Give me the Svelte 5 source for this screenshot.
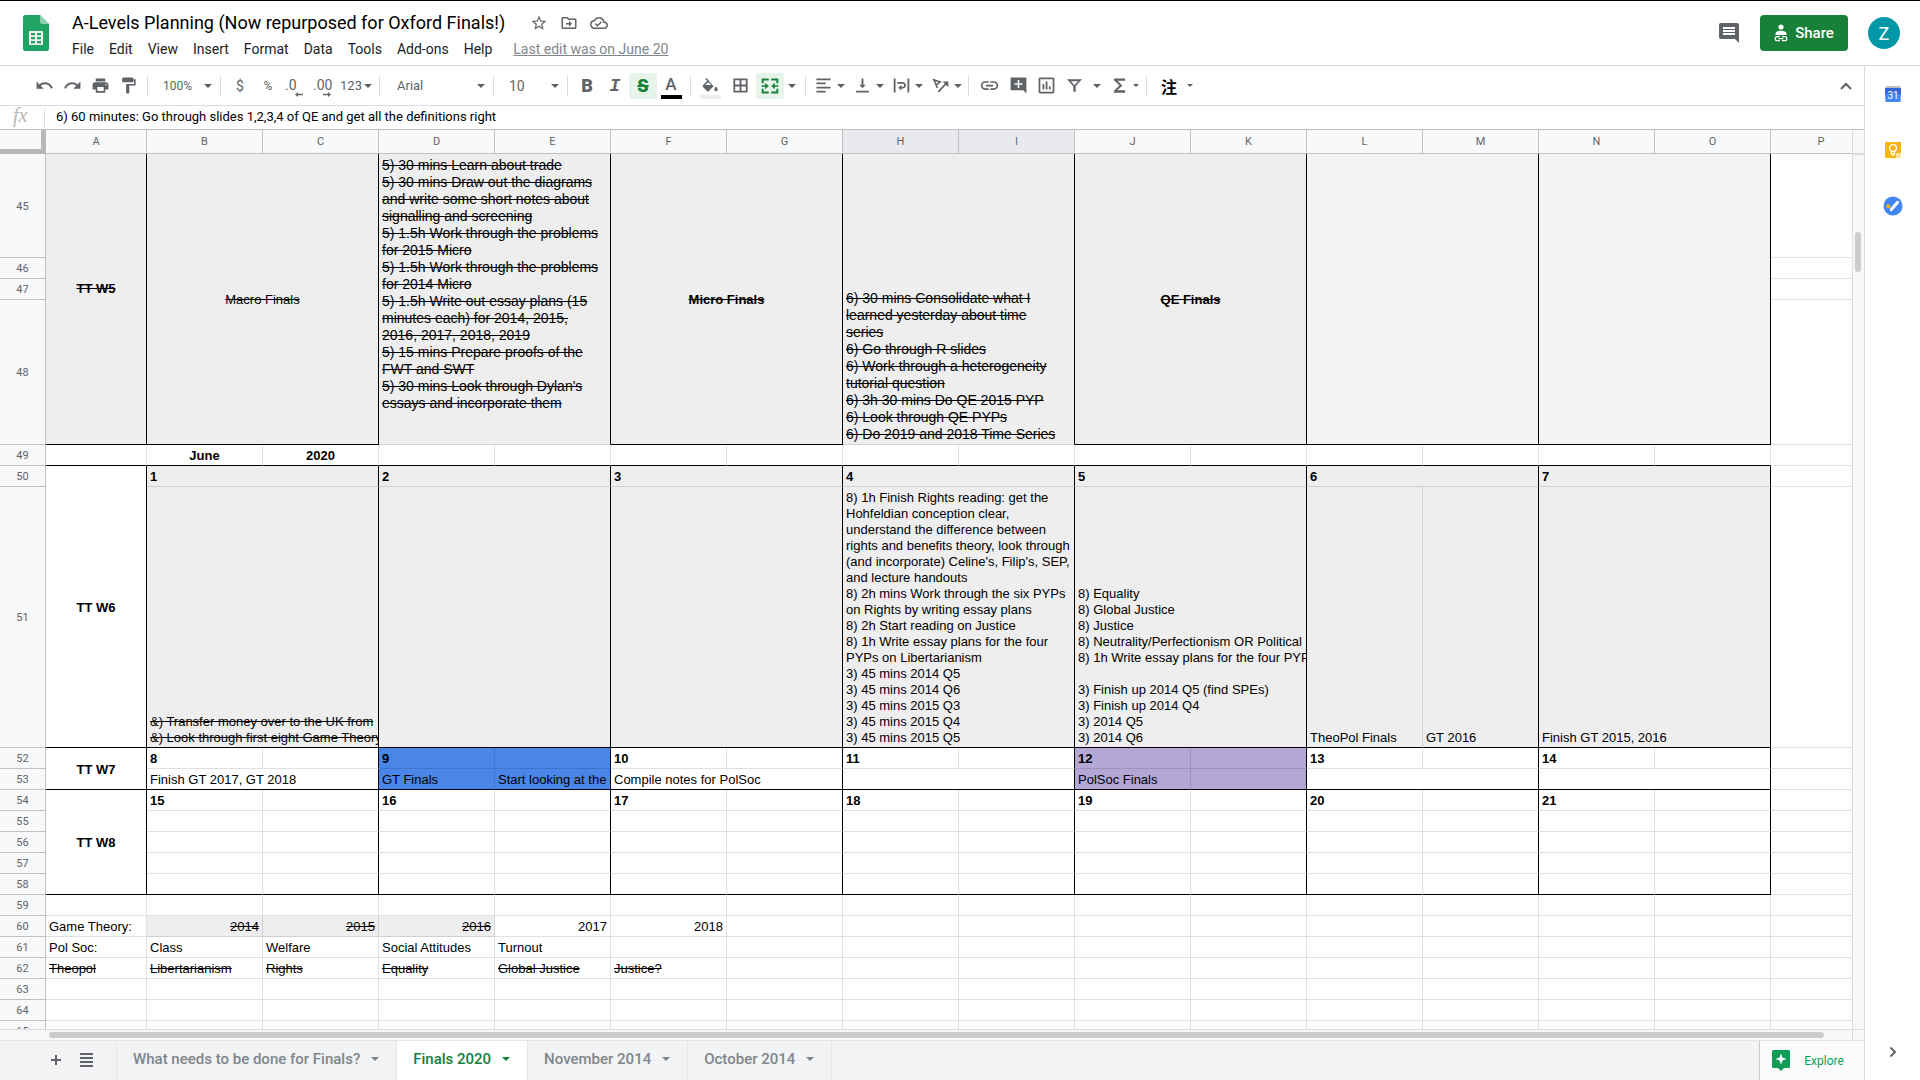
<script>
  const menus = ['File', 'Edit', 'View', 'Insert', 'Format', 'Data', 'Tools', 'Add-ons', 'Help'];

  const icons = {
    undo: 'M12.5 8c-2.65 0-5.05.99-6.9 2.6L2 7v9h9l-3.62-3.62c1.39-1.16 3.16-1.88 5.12-1.88 3.54 0 6.55 2.31 7.6 5.5l2.37-.78C21.08 11.03 17.15 8 12.5 8z',
    redo: 'M18.4 10.6C16.55 8.99 14.15 8 11.5 8c-4.65 0-8.58 3.03-9.96 7.22L3.9 16c1.05-3.19 4.05-5.5 7.6-5.5 1.95 0 3.73.72 5.12 1.88L13 16h9V7l-3.6 3.6z',
    print: 'M19 8H5c-1.66 0-3 1.34-3 3v6h4v4h12v-4h4v-6c0-1.66-1.34-3-3-3zm-3 11H8v-5h8v5zm3-7c-.55 0-1-.45-1-1s.45-1 1-1 1 .45 1 1-.45 1-1 1zm-1-9H6v4h12V3z',
    paint: 'M18 4V3c0-.55-.45-1-1-1H5c-.55 0-1 .45-1 1v4c0 .55.45 1 1 1h12c.55 0 1-.45 1-1V6h1v4H9v11c0 .55.45 1 1 1h2c.55 0 1-.45 1-1v-9h8V4h-3z',
    borders: 'M2 2v20h20V2H2zm8.700 17.500H4.500v-6.200h6.200v6.200zm0-8.800H4.500V4.500h6.200v6.200zm8.800 8.800h-6.200v-6.200h6.200v6.200zm0-8.800h-6.200V4.500h6.200v6.200z',
    merge: 'M2 3h8.500v2.400H4.400v3.400H2zM13.500 3H22v5.800h-2.400V5.400h-6.100zM2 15.200h2.400v3.400h6.100V21H2zM19.600 15.200H22V21h-8.500v-2.400h6.100zM2 11h4.200V8.200L10.500 12l-4.300 3.800V13H2zM22 11h-4.200V8.200L13.500 12l4.300 3.800V13H22z',
    align: 'M2 2h20v2.600H2zM2 7.800h13v2.600H2zM2 13.600h20v2.600H2zM2 19.400h13V22H2z',
    bottom: 'M16.500 11h-3.200V2h-2.600v9H7.500l4.500 5 4.500-5zM3 19.400V22h18v-2.600H3z',
    wrap: 'M1 2h2.600v20H1zM20.400 2H23v20h-2.600zM6 7h7.500c3 0 4.800 2 4.800 4.600s-1.800 4.600-4.800 4.600H12V19l-4.500-4L12 11.200v2.600h1.500c1.400 0 2.300-.9 2.300-2.200s-.9-2.200-2.300-2.200H6z',
    link: 'M3.900 12c0-1.710 1.390-3.100 3.100-3.100h4V7H7c-2.760 0-5 2.240-5 5s2.240 5 5 5h4v-1.900H7c-1.710 0-3.100-1.390-3.100-3.100zM8 13h8v-2H8v2zm9-6h-4v1.900h4c1.710 0 3.100 1.390 3.100 3.100s-1.390 3.100-3.100 3.100h-4V17h4c2.760 0 5-2.240 5-5s-2.240-5-5-5z',
    addComment: 'M22 2.500c0-.300-.2-.5-.5-.5h-19c-.3 0-.5.200-.5.500v15.500h16l4 4V2.500zM17 11h-4v4h-2v-4H7V9h4V5h2v4h4v2z',
    chart: 'M20 2H4c-1.100 0-2 .9-2 2v16c0 1.100.9 2 2 2h16c1.100 0 2-.9 2-2V4c0-1.100-.9-2-2-2zm-.2 17.800H4.200V4.200h15.600v15.600zM7 10h2.200v7H7zM11 7h2.200v10H11zM15 13h2.200v4H15z',
    filter: 'M2.500 4L10.500 13v7h3v-7l8-9h-19zm5 2.500h9L12 11.600z',
    sum: 'M19 3H5v2.500L12 12l-7 6.500V21h14v-3H9.500l6-6-6-6H19z',
    star: 'M22 9.240l-7.190-.62L12 2 9.190 8.630 2 9.240l5.460 4.730L5.820 21 12 17.270 18.180 21l-1.630-7.030L22 9.240zM12 15.400l-3.760 2.270 1-4.280-3.320-2.880 4.380-.38L12 6.100l1.710 4.040 4.380.38-3.320 2.880 1 4.280L12 15.400z',
    folder: 'M20 6h-8l-2-2H4c-1.100 0-2 .9-2 2v12c0 1.100.9 2 2 2h16c1.100 0 2-.9 2-2V8c0-1.100-.9-2-2-2zm0 12H4V6h5.200l2 2H20v10zm-8-1l4-4-4-4v3H8v2h4v3z',
    cloud: 'M19.350 10.040A7.490 7.490 0 0 0 12 4C9.110 4 6.600 5.640 5.350 8.040A5.994 5.994 0 0 0 0 14c0 3.310 2.690 6 6 6h13c2.760 0 5-2.240 5-5 0-2.640-2.050-4.780-4.650-4.960zM19 18H6c-2.210 0-4-1.790-4-4 0-2.050 1.530-3.760 3.560-3.970l1.070-.11.500-.950A5.469 5.469 0 0 1 12 6c2.620 0 4.880 1.860 5.390 4.430l.3 1.500 1.530.11A2.980 2.980 0 0 1 22 15c0 1.650-1.350 3-3 3zm-9-3.820l-2.090-2.090L6.500 13.500 10 17l6.010-6.010-1.410-1.410z'
  };

  const columns = [
    { name: 'A', w: 101 },
    ...'BCDEFGHIJKLMNO'.split('').map((name) => ({ name, w: 116 })),
    { name: 'P', w: 101 }
  ];

  const cell = (cls = '', text = '', cs = 1, rs = 1) => ({ cls, text, cs, rs });
  const blanks = (n, cls = '') => Array.from({ length: n }, () => cell(cls));

  const microTasks = `5) 30 mins Learn about trade
5) 30 mins Draw out the diagrams
and write some short notes about
signalling and screening
5) 1.5h Work through the problems
for 2015 Micro
5) 1.5h Work through the problems
for 2014 Micro
5) 1.5h Write out essay plans (15
minutes each) for 2014, 2015,
2016, 2017, 2018, 2019
5) 15 mins Prepare proofs of the
FWT and SWT
5) 30 mins Look through Dylan's
essays and incorporate them`;

  const seriesTasks = `6) 30 mins Consolidate what I
learned yesterday about time
series
6) Go through R slides
6) Work through a heterogeneity
tutorial question
6) 3h 30 mins Do QE 2015 PYP
6) Look through QE PYPs
6) Do 2019 and 2018 Time Series`;

  const rightsTasks = `8) 1h Finish Rights reading: get the
Hohfeldian conception clear,
understand the difference between
rights and benefits theory, look through
(and incorporate) Celine's, Filip's, SEP,
and lecture handouts
8) 2h mins Work through the six PYPs
on Rights by writing essay plans
8) 2h Start reading on Justice
8) 1h Write essay plans for the four
PYPs on Libertarianism
3) 45 mins 2014 Q5
3) 45 mins 2014 Q6
3) 45 mins 2015 Q3
3) 45 mins 2015 Q4
3) 45 mins 2015 Q5`;

  const equalityTasks = `8) Equality
8) Global Justice
8) Justice
8) Neutrality/Perfectionism OR Political
8) 1h Write essay plans for the four PYPs

3) Finish up 2014 Q5 (find SPEs)
3) Finish up 2014 Q4
3) 2014 Q5
3) 2014 Q6`;

  const transferTasks = `&) Transfer money over to the UK from
&) Look through first eight Game Theory`;

  // a row of day numbers: two columns per day, split in two cells
  const dayRow = (first, fills = {}) =>
    [0, 1, 2, 3, 4, 5, 6].flatMap((i) => {
      const fill = fills[i] ?? '';
      return [cell(`bold ${fill}`, String(first + i)), cell(`kr ${fill}`)];
    });
  const emptyWeekRow = (extra = '') =>
    [0, 1, 2, 3, 4, 5, 6].flatMap(() => [cell(extra), cell(`kr ${extra}`)]);

  const rows = [
    { n: 45, h: 104, cells: [
      cell('grey kr kb bold strike mid raised', 'TT W5', 1, 4),
      cell('grey kr kb strike mid', 'Macro Finals', 2, 4),
      cell('grey kr strike large upper', microTasks, 2, 4),
      cell('grey kr kb bold strike mid', 'Micro Finals', 2, 4),
      cell('grey kr strike large', seriesTasks, 2, 4),
      cell('grey kr kb bold strike mid', 'QE Finals', 2, 4),
      cell('pale kr kb', '', 2, 4),
      cell('pale kr kb', '', 2, 4),
      cell()
    ] },
    { n: 46, h: 21, cells: [cell()] },
    { n: 47, h: 21, cells: [cell()] },
    { n: 48, h: 145, cells: [cell()] },
    { n: 49, h: 21, cells: [
      cell('kb'), cell('kb bold mid', 'June'), cell('kb bold mid', '2020'), ...blanks(12, 'kb'), cell()
    ] },
    { n: 50, h: 21, cells: [
      cell('kr kb bold mid', 'TT W6', 1, 2),
      ...[1, 2, 3, 4, 5, 6, 7].map((d) => cell('grey kr bold', String(d), 2)),
      cell()
    ] },
    { n: 51, h: 261, cells: [
      cell('grey kr kb strike', transferTasks, 2),
      cell('grey kr kb', '', 2),
      cell('grey kr kb', '', 2),
      cell('grey kr kb', rightsTasks, 2),
      cell('grey kr kb', equalityTasks, 2),
      cell('grey kb', 'TheoPol Finals'),
      cell('grey kr kb', 'GT 2016'),
      cell('grey kr kb', 'Finish GT 2015, 2016', 2),
      cell()
    ] },
    { n: 52, h: 21, cells: [
      cell('kr kb bold mid', 'TT W7', 1, 2), ...dayRow(8, { 1: 'blue', 4: 'purple' }), cell()
    ] },
    { n: 53, h: 21, cells: [
      cell('kr kb', 'Finish GT 2017, GT 2018', 2),
      cell('blue kb', 'GT Finals'),
      cell('blue kr kb', 'Start looking at the'),
      cell('kr kb', 'Compile notes for PolSoc', 2),
      cell('kr kb', '', 2),
      cell('purple kb', 'PolSoc Finals'),
      cell('purple kr kb'),
      cell('kr kb', '', 2),
      cell('kr kb', '', 2),
      cell()
    ] },
    { n: 54, h: 21, cells: [cell('kr kb bold mid', 'TT W8', 1, 5), ...dayRow(15), cell()] },
    { n: 55, h: 21, cells: [...emptyWeekRow(), cell()] },
    { n: 56, h: 21, cells: [...emptyWeekRow(), cell()] },
    { n: 57, h: 21, cells: [...emptyWeekRow(), cell()] },
    { n: 58, h: 21, cells: [...emptyWeekRow('kb'), cell()] },
    { n: 59, h: 21, cells: blanks(16) },
    { n: 60, h: 21, cells: [
      cell('', 'Game Theory:'),
      cell('grey strike num', '2014'), cell('grey strike num', '2015'), cell('grey strike num', '2016'),
      cell('num', '2017'), cell('num', '2018'), ...blanks(10)
    ] },
    { n: 61, h: 21, cells: [
      ...['Pol Soc:', 'Class', 'Welfare', 'Social Attitudes', 'Turnout'].map((t) => cell('', t)), ...blanks(11)
    ] },
    { n: 62, h: 21, cells: [
      ...['Theopol', 'Libertarianism', 'Rights', 'Equality', 'Global Justice', 'Justice?'].map((t) => cell('strike', t)),
      ...blanks(10)
    ] },
    { n: 63, h: 21, cells: blanks(16) },
    { n: 64, h: 21, cells: blanks(16) },
    { n: 65, h: 21, cells: blanks(16) }
  ];

  const sheets = [
    { name: 'What needs to be done for Finals?' },
    { name: 'Finals 2020', active: true },
    { name: 'November 2014' },
    { name: 'October 2014' }
  ];
</script>

{#snippet icon(name)}
  <svg class="icon" viewBox="0 0 24 24" aria-hidden="true"><path d={icons[name]} /></svg>
{/snippet}

{#snippet caret()}
  <svg class="caret" viewBox="0 0 8 4" aria-hidden="true"><path d="M0 0h8L4 4z" /></svg>
{/snippet}

<div class="app">
  <header class="top">
    <svg class="logo" viewBox="0 0 26 36" aria-label="Sheets">
      <path d="M2.500 0H17l9 9v24.500a2.500 2.500 0 0 1-2.500 2.500h-21A2.500 2.500 0 0 1 0 33.500v-31A2.500 2.500 0 0 1 2.500 0z" fill="#1fa463" />
      <path d="M17 0l9 9h-6.500A2.500 2.500 0 0 1 17 6.500z" fill="#8ed1b1" />
      <path d="M6 16h14v14H6zM8 18v2.300h4V18zm6 0v2.300h4V18zM8 22v2.200h4V22zm6 0v2.200h4V22zM8 26v2.200h4V26zm6 0v2.200h4V26z" fill="#f1f1f1" fill-rule="evenodd" />
    </svg>
    <div class="heading">
      <div class="title-row">
        <h1>A-Levels Planning (Now repurposed for Oxford Finals!)</h1>
        <button aria-label="Star">{@render icon('star')}</button>
        <button aria-label="Move">{@render icon('folder')}</button>
        <button aria-label="See document status">{@render icon('cloud')}</button>
      </div>
      <nav class="menus">
        {#each menus as m}<button>{m}</button>{/each}
        <a href="#history">Last edit was on June 20</a>
      </nav>
    </div>
    <button class="comments" aria-label="Open comment history">
      <svg viewBox="0 0 20 20"><path d="M2 0h16a2 2 0 0 1 2 2v18l-4-4H2a2 2 0 0 1-2-2V2a2 2 0 0 1 2-2zm2 4v2h12V4zm0 3v2h12V7zm0 3v2h12v-2z" fill="#5f6368" fill-rule="evenodd" /></svg>
    </button>
    <button class="share">
      <svg viewBox="0 0 14 18" aria-hidden="true">
        <circle cx="7" cy="3" r="2.600" fill="#fff" />
        <path d="M1.500 11V9.800C1.500 7.500 5 6.800 7 6.800s5.500.7 5.500 3V11z" fill="#fff" />
        <path d="M6 12.700H3.200a2 2 0 0 0 0 4H6M8 12.700h2.800a2 2 0 0 1 0 4H8M4.500 14.700h5" fill="none" stroke="#fff" stroke-width="1.200" />
      </svg>
      Share
    </button>
    <button class="avatar" aria-label="Account">Z</button>
  </header>

  <div class="body">
    <main class="editor">
      <div class="toolbar" role="toolbar" aria-label="Formatting">
        <button class="tool" aria-label="Undo">{@render icon('undo')}</button>
        <button class="tool" aria-label="Redo">{@render icon('redo')}</button>
        <button class="tool" aria-label="Print">{@render icon('print')}</button>
        <button class="tool" aria-label="Paint format">{@render icon('paint')}</button>
        <span class="sep"></span>
        <span class="pick zoom">
          <select aria-label="Zoom"><option>100%</option></select>{@render caret()}
        </span>
        <span class="sep"></span>
        <button class="tool" aria-label="Format as currency">$</button>
        <button class="tool small" aria-label="Format as percent">%</button>
        <button class="tool decimal" aria-label="Decrease decimal places">
          .0<svg viewBox="0 0 8 5"><path d="M0 2.500L3 0v1.800h5v1.400H3V5z" /></svg>
        </button>
        <button class="tool decimal" aria-label="Increase decimal places">
          .00<svg viewBox="0 0 8 5"><path d="M8 2.500L5 0v1.800H0v1.400h5V5z" /></svg>
        </button>
        <button class="tool formats" aria-label="More formats">123{@render caret()}</button>
        <span class="sep"></span>
        <span class="pick font">
          <select aria-label="Font"><option>Arial</option></select>{@render caret()}
        </span>
        <span class="sep"></span>
        <span class="pick size">
          <select aria-label="Font size"><option>10</option></select>{@render caret()}
        </span>
        <span class="sep"></span>
        <button class="tool glyph b" aria-label="Bold">B</button>
        <button class="tool glyph i" aria-label="Italic">I</button>
        <button class="tool glyph s on" aria-label="Strikethrough">S</button>
        <button class="tool swatch" aria-label="Text color"><span>A</span><i class="bar black"></i></button>
        <span class="sep"></span>
        <span class="cluster">
          <button class="tool swatch" aria-label="Fill color">
            <svg class="bucket" viewBox="0 0 18 14" aria-hidden="true"><path d="M5.500 0L4.300 1.200 6.200 3 2 7.200c-.5.5-.5 1.300 0 1.800l4 4c.5.500 1.300.500 1.800 0L12.500 8.200zM7.300 4.200l2.900 2.900H4.400zM15 8.500s-1.700 1.900-1.700 3a1.700 1.700 0 0 0 3.400 0c0-1.100-1.700-3-1.700-3z" fill-rule="evenodd" /></svg>
            <i class="bar light"></i>
          </button>
          <button class="tool" aria-label="Borders">{@render icon('borders')}</button>
          <button class="tool merge on" aria-label="Merge cells">{@render icon('merge')}</button>
        </span>
        <button class="drop wide" aria-label="Select merge type">{@render caret()}</button>
        <span class="sep"></span>
        <span class="cluster split">
          <button class="pair" aria-label="Horizontal align">{@render icon('align')}{@render caret()}</button>
          <button class="pair" aria-label="Vertical align">{@render icon('bottom')}{@render caret()}</button>
          <button class="pair" aria-label="Text wrapping">{@render icon('wrap')}{@render caret()}</button>
          <button class="pair" aria-label="Text rotation">
            <svg class="icon" viewBox="0 0 24 24" aria-hidden="true">
              <path d="M1 3.500l12 4M2.500 3l5 12.500M11.500 6.500L5.500 12" fill="none" stroke="#5f6368" stroke-width="2.200" />
              <path d="M9 21L19 10" fill="none" stroke="#5f6368" stroke-width="2.400" />
              <path d="M15 6.500h8v8z" />
            </svg>{@render caret()}
          </button>
        </span>
        <span class="sep"></span>
        <button class="tool big" aria-label="Insert link">{@render icon('link')}</button>
        <button class="tool" aria-label="Insert comment">{@render icon('addComment')}</button>
        <button class="tool" aria-label="Insert chart">{@render icon('chart')}</button>
        <button class="tool" aria-label="Create a filter">{@render icon('filter')}</button>
        <button class="drop wider" aria-label="Filter views">{@render caret()}</button>
        <button class="pair tiny" aria-label="Functions">{@render icon('sum')}{@render caret()}</button>
        <span class="sep"></span>
        <button class="pair tiny ime" aria-label="Input tools"><span lang="zh">注</span>{@render caret()}</button>
        <button class="tool collapse" aria-label="Hide the menus">
          <svg viewBox="0 0 12 8"><path d="M1 7l5-5 5 5" fill="none" stroke="#5f6368" stroke-width="2" /></svg>
        </button>
      </div>

      <div class="formula">
        <label for="fx">fx</label>
        <input id="fx" value="6) 60 minutes: Go through slides 1,2,3,4 of QE and get all the definitions right" />
      </div>

      <div class="sheet">
        <div class="grid">
          <table>
            <colgroup>
              <col class="rowhead" />
              {#each columns as c}<col style:width="{c.w}px" />{/each}
            </colgroup>
            <thead>
              <tr>
                <td class="corner"></td>
                {#each columns as c}
                  <th scope="col" class:selected={c.name === 'H' || c.name === 'I'}>{c.name}</th>
                {/each}
              </tr>
            </thead>
            <tbody>
              {#each rows as r}
                <tr style:height="{r.h}px">
                  <th scope="row">{r.n}</th>
                  {#each r.cells as c}
                    <td class={c.cls} colspan={c.cs} rowspan={c.rs}>{c.text}</td>
                  {/each}
                </tr>
              {/each}
            </tbody>
          </table>
        </div>
        <div class="vscroll"><div class="vcap"></div><div class="vthumb"></div></div>
        <div class="hscroll"><div class="hthumb"></div></div>
        <div class="scrollcorner"></div>
      </div>

      <footer class="tabs">
        <button class="tabtool" aria-label="Add sheet">
          <svg viewBox="0 0 10 10"><path d="M4 0h2v4h4v2H6v4H4V6H0V4h4z" /></svg>
        </button>
        <button class="tabtool" aria-label="All sheets">
          <svg class="list" viewBox="0 0 13 14"><path d="M0 0h13v2H0zM0 4h13v2H0zM0 8h13v2H0zM0 12h13v2H0z" /></svg>
        </button>
        <div class="tablist">
          {#each sheets as s}
            <button class="tab" class:active={s.active}>{s.name}{@render caret()}</button>
          {/each}
        </div>
        <button class="explore">
          <svg viewBox="0 0 18 21" aria-hidden="true">
            <path d="M1.500 0h15A1.500 1.500 0 0 1 18 1.500v15a1.500 1.500 0 0 1-1.500 1.500H12l-3 3-3-3H1.500A1.500 1.500 0 0 1 0 16.500v-15A1.500 1.500 0 0 1 1.500 0z" fill="#0f9d58" />
            <path d="M9 3.500l1.500 4 4 1.500-4 1.500-1.500 4-1.500-4-4-1.500 4-1.500z" fill="#fff" />
          </svg>
          Explore
        </button>
      </footer>
    </main>

    <aside class="side">
      <button aria-label="Calendar">
        <svg viewBox="0 0 20 20">
          <path d="M3 2h14l1 3H2z" fill="#bdbdbd" />
          <path d="M2 4h16v6l-.500 8H2.500L2 10z" fill="#4285f4" />
          <path d="M2 4h16v6H2z" fill="#3367d6" />
          <text x="10" y="15" text-anchor="middle" font-size="10" fill="#fff">31</text>
        </svg>
      </button>
      <button aria-label="Keep">
        <svg viewBox="0 0 20 20">
          <path d="M3 2h14a1 1 0 0 1 1 1v10l-5 5H3a1 1 0 0 1-1-1V3a1 1 0 0 1 1-1z" fill="#f5b70f" />
          <path d="M18 13v4a1 1 0 0 1-1 1h-4v-4a1 1 0 0 1 1-1z" fill="#ffe59a" />
          <circle cx="10" cy="8" r="3.400" fill="none" stroke="#fff" stroke-width="1.200" />
          <path d="M8.500 11v3h3v-3M8.500 15h3" fill="none" stroke="#fff" stroke-width="1.200" />
        </svg>
      </button>
      <button aria-label="Tasks">
        <svg viewBox="0 0 20 20">
          <circle cx="10" cy="10" r="9.500" fill="#4285f4" />
          <circle cx="5.200" cy="10.200" r="2" fill="#f5b70f" />
          <path d="M8.300 13.500l6.200-7" stroke="#fff" stroke-width="3.200" stroke-linecap="round" />
        </svg>
      </button>
      <button class="hide" aria-label="Hide side panel">
        <svg viewBox="0 0 8 12"><path d="M1.500 1.500L6 6l-4.500 4.500" fill="none" stroke="#5f6368" stroke-width="2" /></svg>
      </button>
    </aside>
  </div>
</div>

<style>
  :global(body) {
    margin: 0;
    background: #fff;
  }
  .app {
    display: flex;
    flex-direction: column;
    height: 100vh;
    box-sizing: border-box;
    border-top: 1px solid #000;
    overflow: hidden;
    font-family: Roboto, sans-serif;
    color: #202124;
  }
  button {
    display: flex;
    align-items: center;
    justify-content: center;
    padding: 0;
    border: 0;
    background: none;
    font: inherit;
    color: inherit;
    cursor: pointer;
  }
  svg {
    display: block;
    flex: none;
    fill: #5f6368;
  }

  /* title bar */
  .top {
    display: flex;
    align-items: center;
    flex: none;
    height: 64px;
    padding: 0 20px 0 23px;
    border-bottom: 1px solid #dadce0;
  }
  .logo {
    width: 26px;
    height: 36px;
  }
  .heading {
    flex: 1;
    min-width: 0;
    margin-left: 23px;
    padding-top: 6px;
  }
  .title-row {
    display: flex;
    align-items: center;
    gap: 12px;
    height: 26px;
  }
  h1 {
    margin: 0 13px 0 0;
    font-size: 18px;
    font-weight: 400;
    line-height: 24px;
    color: #000;
    white-space: nowrap;
  }
  .title-row svg {
    width: 18px;
    height: 18px;
  }
  .menus {
    display: flex;
    gap: 15px;
    height: 26px;
    align-items: center;
    font-size: 14px;
    line-height: 20px;
    white-space: nowrap;
  }
  .menus a {
    margin-left: 6px;
    color: #80868b;
  }
  .comments svg {
    width: 20px;
    height: 20px;
  }
  .share {
    gap: 7px;
    width: 88px;
    height: 36px;
    margin: 0 20px 0 21px;
    border-radius: 4px;
    background: #188038;
    color: #fff;
    font-size: 15px;
    font-weight: 500;
  }
  .share svg {
    width: 14px;
    height: 18px;
  }
  .avatar {
    width: 32px;
    height: 32px;
    border-radius: 50%;
    background: #0097a7;
    color: #fff;
    font-size: 18px;
  }

  .body {
    display: flex;
    flex: 1;
    min-height: 0;
  }
  .editor {
    display: flex;
    flex-direction: column;
    flex: 1;
    min-width: 0;
    border-right: 1px solid #dadce0;
  }

  /* toolbar */
  .toolbar {
    display: flex;
    align-items: center;
    flex: none;
    height: 39px;
    padding: 0 4px 0 30px;
    border-bottom: 1px solid #dadce0;
    color: #5f6368;
    font-size: 14px;
  }
  .tool {
    width: 28px;
    height: 26px;
    border-radius: 2px;
  }
  .icon {
    width: 19px;
    height: 19px;
  }
  .caret {
    width: 8px;
    height: 4px;
  }
  .sep {
    flex: none;
    width: 1px;
    height: 20px;
    margin: 0 5px;
    background: #dadce0;
  }
  .small {
    font-size: 12px;
  }
  .decimal {
    flex-direction: column;
    align-items: flex-start;
    box-sizing: border-box;
    padding: 3px 0 0 3px;
    line-height: 14px;
  }
  .decimal svg {
    width: 8px;
    height: 5px;
    margin-left: 10px;
  }
  .formats {
    gap: 2px;
    width: 36px;
    font-size: 13px;
  }
  .pick {
    display: grid;
    align-items: center;
    width: 63px;
  }
  .pick select,
  .pick .caret {
    grid-area: 1 / 1;
  }
  .pick .caret {
    justify-self: end;
    margin-right: 3px;
    pointer-events: none;
  }
  .pick select {
    appearance: none;
    width: 100%;
    height: 26px;
    padding: 0 0 0 10px;
    border: 0;
    background: none;
    font: inherit;
    color: inherit;
  }
  .pick.zoom {
    width: 62px;
    font-size: 12px;
  }
  .pick.font {
    width: 103px;
    font-size: 13px;
  }
  .pick.font select {
    padding-left: 12px;
  }
  .glyph {
    font-size: 18px;
    font-weight: 900;
  }
  .i {
    font-family: "Liberation Mono", monospace;
    font-style: italic;
  }
  .on {
    background: #e6f4ea;
    color: #188038;
  }
  .s {
    text-decoration: line-through 2px;
  }
  .on .icon {
    fill: #188038;
  }
  .swatch {
    flex-direction: column;
    justify-content: flex-end;
    gap: 2px;
    font-size: 17px;
    font-weight: 500;
    line-height: 18px;
  }
  .bar {
    width: 21px;
    height: 4px;
  }
  .black {
    background: #000;
  }
  .light {
    background: #eee;
  }
  .bucket {
    width: 18px;
    height: 16px;
  }
  .cluster {
    display: flex;
    gap: 2px;
  }
  .split {
    gap: 4px;
  }
  .cluster .icon {
    width: 17px;
    height: 17px;
  }
  .merge .icon {
    width: 20px;
    height: 20px;
  }
  .drop {
    height: 26px;
  }
  .wide {
    width: 16px;
  }
  .wider {
    width: 18px;
  }
  .pair {
    justify-content: space-between;
    width: 35px;
    height: 26px;
    padding: 0 1px 0 4px;
    box-sizing: border-box;
  }
  .tiny .caret {
    width: 6px;
    height: 3px;
  }
  .tiny {
    padding-right: 2px;
  }
  .ime {
    width: 43px;
    padding-left: 9px;
    color: #000;
    font-family: "Noto Sans CJK SC", sans-serif;
    font-size: 16px;
    font-weight: 700;
  }
  .big {
    width: 30px;
  }
  .big .icon {
    width: 21px;
    height: 21px;
  }
  .collapse {
    margin-left: auto;
  }
  .collapse svg {
    width: 12px;
    height: 8px;
  }

  /* formula bar */
  .formula {
    display: flex;
    align-items: center;
    flex: none;
    height: 23px;
    border-bottom: 1px solid #c0c0c0;
  }
  .formula label {
    flex: none;
    width: 45px;
    height: 18px;
    box-sizing: border-box;
    padding-left: 13px;
    border-right: 1px solid #dadce0;
    font: italic 20px/12px "Liberation Serif", serif;
    color: #b7b7b7;
  }
  .formula input {
    flex: 1;
    min-width: 0;
    padding: 0 0 2px 11px;
    border: 0;
    outline: 0;
    background: none;
    font: 13px/20px Roboto, sans-serif;
    color: #000;
  }

  /* spreadsheet */
  .sheet {
    display: grid;
    grid-template: minmax(0, 1fr) 11px / minmax(0, 1fr) 12px;
    flex: 1;
    min-height: 0;
  }
  .grid {
    overflow: hidden;
  }
  table {
    width: 1872px;
    table-layout: fixed;
    border-spacing: 0;
    font: 13px/16px "Liberation Sans", Arial, sans-serif;
    color: #000;
  }
  .rowhead {
    width: 46px;
  }
  th {
    padding: 0;
    border: 0 solid #c0c0c0;
    border-width: 0 1px 1px 0;
    background: #f8f9fa;
    font: 11px/16px Roboto, sans-serif;
    color: #5f6368;
  }
  tbody th {
    padding-top: 2px;
  }
  thead tr {
    height: 24px;
  }
  th.selected {
    background: #e8eaed;
  }
  .corner {
    border: 0 solid #b7b7b7;
    border-width: 0 5px 5px 0;
    background: #f8f9fa;
  }
  tbody td {
    padding: 0 3px 1px;
    border: 0 solid rgba(0, 0, 0, 0.12);
    border-width: 0 1px 1px 0;
    vertical-align: bottom;
    white-space: pre;
    overflow: hidden;
  }
  tbody td.kr {
    border-right-color: #000;
  }
  tbody td.kb {
    border-bottom-color: #000;
  }
  .grey {
    background: #eee;
  }
  .pale {
    background: #f3f3f3;
  }
  .blue {
    background: #4a86e8;
  }
  .purple {
    background: #b4a7d6;
  }
  .bold {
    font-weight: 700;
  }
  .strike {
    text-decoration: line-through;
  }
  tbody td.mid {
    padding: 2px 3px 0;
    text-align: center;
    vertical-align: middle;
  }
  .num {
    text-align: right;
  }
  tbody td.raised {
    padding-bottom: 22px;
  }
  .large {
    font-size: 14px;
    line-height: 17px;
  }
  tbody td.upper {
    padding-top: 3px;
    vertical-align: top;
  }

  .vscroll {
    border-left: 1px solid #dadce0;
    background: #f8f8f8;
  }
  .vcap {
    height: 23px;
    border-bottom: 2px solid #dadce0;
  }
  .vthumb {
    width: 6px;
    height: 40px;
    margin: 77px 0 0 2px;
    border-radius: 3px;
    background: #ccc;
  }
  .hscroll,
  .scrollcorner {
    border-top: 1px solid #dadce0;
    background: #f8f8f8;
  }
  .scrollcorner {
    border-left: 1px solid #dadce0;
  }
  .hscroll {
    padding: 2px 28px 0 49px;
  }
  .hthumb {
    height: 6px;
    border-radius: 3px;
    background: #ccc;
  }

  /* sheet tabs */
  .tabs {
    display: flex;
    flex: none;
    height: 39px;
    padding-left: 40px;
    border-top: 1px solid #e3e5e8;
    background: #f1f3f4;
  }
  .tabtool {
    width: 31px;
    padding-bottom: 2px;
  }
  .tabtool svg {
    width: 10px;
    height: 10px;
  }
  .tabtool .list {
    width: 13px;
    height: 14px;
  }
  .tablist {
    display: flex;
    margin-left: 14px;
    border-left: 1px solid #e3e5e8;
  }
  .tab {
    gap: 11px;
    padding: 0 17px 3px 16px;
    border-right: 1px solid #e3e5e8;
    color: #80868b;
    font-size: 15px;
    font-weight: 500;
    white-space: nowrap;
  }
  .tab .caret {
    fill: #80868b;
  }
  .tab.active {
    background: #fff;
    color: #188038;
  }
  .tab.active .caret {
    fill: #188038;
  }
  .explore {
    gap: 14px;
    width: 105px;
    margin-left: auto;
    padding-right: 8px;
    box-sizing: border-box;
    border-left: 1px solid #c8cacd;
    background: #fbfbfb;
    color: #0f9d58;
    font-size: 12px;
  }
  .explore svg {
    width: 18px;
    height: 21px;
  }

  /* side panel */
  .side {
    display: flex;
    flex-direction: column;
    align-items: center;
    gap: 36px;
    width: 55px;
    padding-top: 18px;
    box-sizing: border-box;
  }
  .side svg {
    width: 20px;
    height: 20px;
  }
  .side .hide {
    margin: auto 0 22px;
  }
  .side .hide svg {
    width: 8px;
    height: 12px;
  }
</style>
